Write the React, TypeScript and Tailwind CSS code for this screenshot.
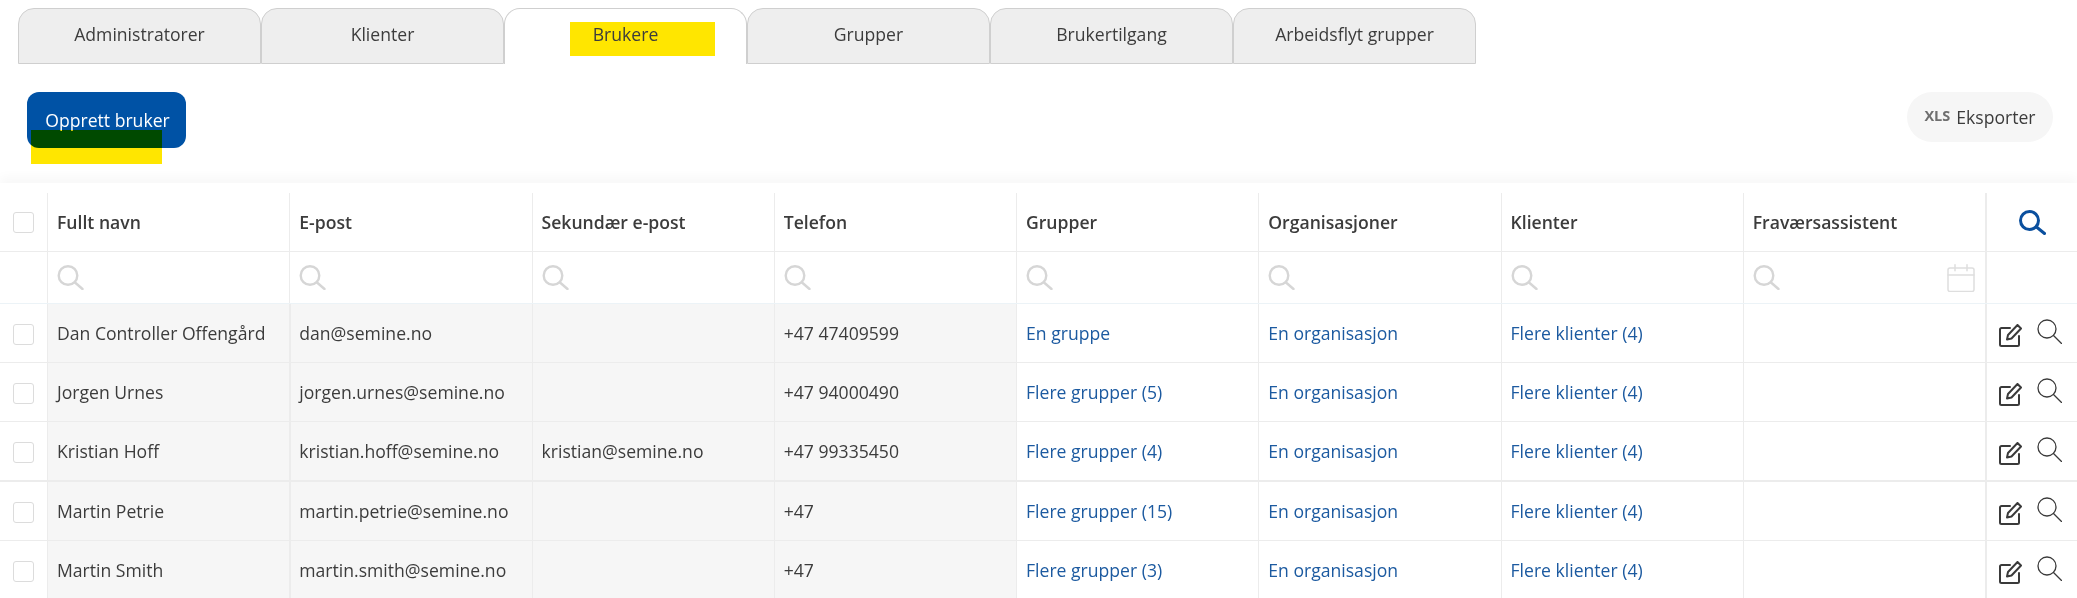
const tabs = ['Administratorer', 'Klienter', 'Brukere', 'Grupper', 'Brukertilgang', 'Arbeidsflyt grupper']

const columns = ['Fullt navn', 'E-post', 'Sekundær e-post', 'Telefon', 'Grupper', 'Organisasjoner', 'Klienter', 'Fraværsassistent']

const users = [
  { name: 'Dan Controller Offengård', email: 'dan@semine.no', secondary: '', phone: '+47 47409599', groups: 'En gruppe' },
  { name: 'Jorgen Urnes', email: 'jorgen.urnes@semine.no', secondary: '', phone: '+47 94000490', groups: 'Flere grupper (5)' },
  { name: 'Kristian Hoff', email: 'kristian.hoff@semine.no', secondary: 'kristian@semine.no', phone: '+47 99335450', groups: 'Flere grupper (4)' },
  { name: 'Martin Petrie', email: 'martin.petrie@semine.no', secondary: '', phone: '+47', groups: 'Flere grupper (15)' },
  { name: 'Martin Smith', email: 'martin.smith@semine.no', secondary: '', phone: '+47', groups: 'Flere grupper (3)' },
]

function Checkbox() {
  return <div className="mx-auto h-[21px] w-[21px] rounded-[3px] border border-[#dcdcdc] bg-white" />
}

function EditIcon() {
  return (
    <svg width="23" height="23" viewBox="0 0 23 23" fill="none" stroke="#3a3a3a" strokeWidth="2" strokeLinejoin="round" strokeLinecap="round">
      <path d="M11 4H2.5A1.5 1.5 0 0 0 1 5.500V20.500A1.500 1.500 0 0 0 2.500 22H18.500A1.500 1.500 0 0 0 20 20.500V12" />
      <path d="M18.500 1 22 4.500 12.500 14.500 8 15.500 9 11z" />
    </svg>
  )
}

function ThinSearch() {
  return (
    <svg width="25" height="25" viewBox="0 0 25 25" fill="none" stroke="#3a3a3a" strokeWidth="1.3" strokeLinecap="round">
      <circle cx="10" cy="10" r="9" />
      <path d="M16.500 16.500 24.500 24.500" />
    </svg>
  )
}

function HeaderSearch() {
  return (
    <svg width="28" height="25" viewBox="0 0 28 25" fill="none" stroke="#0a4f9e" strokeWidth="3" strokeLinecap="round">
      <circle cx="11.500" cy="10.500" r="9" />
      <path d="M18.500 17 26.500 23.500" />
    </svg>
  )
}

function FilterSearch() {
  return (
    <svg width="27" height="25" viewBox="0 0 27 25" fill="none" stroke="#d6d6d6" strokeWidth="2.4" strokeLinecap="round">
      <circle cx="11" cy="10.500" r="9.300" />
      <path d="M18 17.500 25.500 24" />
    </svg>
  )
}

function CalendarIcon() {
  return (
    <svg width="28" height="28" viewBox="0 0 28 28" fill="none" stroke="#dedede" strokeWidth="1.500" strokeLinecap="round">
      <rect x="1" y="4" width="26" height="23.500" rx="2" />
      <path d="M1 11h26M8 0.750v6M20 0.750v6" />
    </svg>
  )
}

export default function App() {
  return (
    <div className="h-[598px] w-[2077px] overflow-hidden bg-white font-['Open_Sans',sans-serif] text-[17.6px] text-[#3c3c3c]">
      {/* Tabs */}
      <div className="flex h-[64px] pl-[18px] pt-2">
        {tabs.map((tab) => {
          const active = tab === 'Brukere'
          return (
            <div
              key={tab}
              className={
                active
                  ? 'relative flex w-[243px] items-center justify-center rounded-t-[16px] border border-b-0 border-[#cfcfcf] bg-white pb-1'
                  : 'flex w-[243px] items-center justify-center rounded-t-[16px] border border-[#cfcfcf] bg-[#eeeeee] pb-1'
              }
            >
              {active && <span className="absolute left-[65px] top-[13px] h-[34px] w-[145px] bg-[#ffe600]" />}
              <span className="relative">{tab}</span>
            </div>
          )
        })}
      </div>

      {/* Actions */}
      <div className="flex h-[119px] items-start justify-between pl-[27px] pr-[24px] pt-7">
        <div className="relative">
          <button className="flex h-[56px] w-[159px] items-center justify-center rounded-[12px] bg-[#0052a5] pl-[2px] text-white">
            Opprett bruker
          </button>
          <span className="absolute left-1 top-[38px] h-[34px] w-[131px] bg-[#ffe600] mix-blend-multiply" />
        </div>
        <button className="flex h-[50px] w-[146px] items-center justify-center gap-[6px] rounded-full bg-[#f6f6f6]">
          <span className="mb-[3px] text-[14.5px] font-bold text-[#6f6f6f]">XLS</span>
          Eksporter
        </button>
      </div>

      {/* Table */}
      <div className="shadow-[0_-6px_10px_rgba(0,0,0,0.03)]">
        <div className="grid h-[69px] grid-cols-[47px_repeat(8,242.25px)_92px] border-b border-[#ececec] pt-[10px]">
          <div className="flex items-center">
            <Checkbox />
          </div>
          {columns.map((col) => (
            <div key={col} className="flex items-center border-l border-[#ececec] pl-[9px] font-semibold">
              {col}
            </div>
          ))}
          <div className="flex items-center justify-center border-l-2 border-[#ececec]">
            <HeaderSearch />
          </div>
        </div>
        <div className="grid h-[52px] grid-cols-[47px_repeat(8,242.25px)_92px] border-b border-[#ecf3f7]">
          <div />
          {columns.map((col) => (
            <div key={col} className="flex items-center justify-between border-l border-[#ececec] pl-[9px] pr-[10px]">
              <FilterSearch />
              {col === 'Fraværsassistent' && <CalendarIcon />}
            </div>
          ))}
          <div className="border-l-2 border-[#ececec]" />
        </div>
        {users.map((user, i) => (
          <div
            key={user.email}
            className={
              i === 2
                ? 'grid h-[60px] grid-cols-[47px_repeat(8,242.25px)_92px] border-b-2 border-[#ececec]'
                : 'grid h-[59px] grid-cols-[47px_repeat(8,242.25px)_92px] border-b border-[#ececec]'
            }
          >
            <div className="flex items-center pt-[3px]">
              <Checkbox />
            </div>
            <div className="flex items-center border-l border-[#ececec] bg-[#f6f6f6] pl-[9px]">{user.name}</div>
            <div className="flex items-center border-l-2 border-[#ececec] bg-[#f6f6f6] pl-[8px]">{user.email}</div>
            <div className="flex items-center border-l border-[#ececec] bg-[#f6f6f6] pl-[9px]">{user.secondary}</div>
            <div className="flex items-center border-l border-[#ececec] bg-[#f6f6f6] pl-[9px]">{user.phone}</div>
            <div className="flex items-center border-l border-[#ececec] pl-[9px] text-[#1c5aa0]">{user.groups}</div>
            <div className="flex items-center border-l border-[#ececec] pl-[9px] text-[#1c5aa0]">En organisasjon</div>
            <div className="flex items-center border-l border-[#ececec] pl-[9px] text-[#1c5aa0]">Flere klienter (4)</div>
            <div className="border-l border-[#ececec]" />
            <div className="flex items-center gap-[15px] border-l-2 border-[#ececec] pl-3">
              <div className="mt-[5px]">
                <EditIcon />
              </div>
              <div className="mb-[3px]">
                <ThinSearch />
              </div>
            </div>
          </div>
        ))}
      </div>
    </div>
  )
}
